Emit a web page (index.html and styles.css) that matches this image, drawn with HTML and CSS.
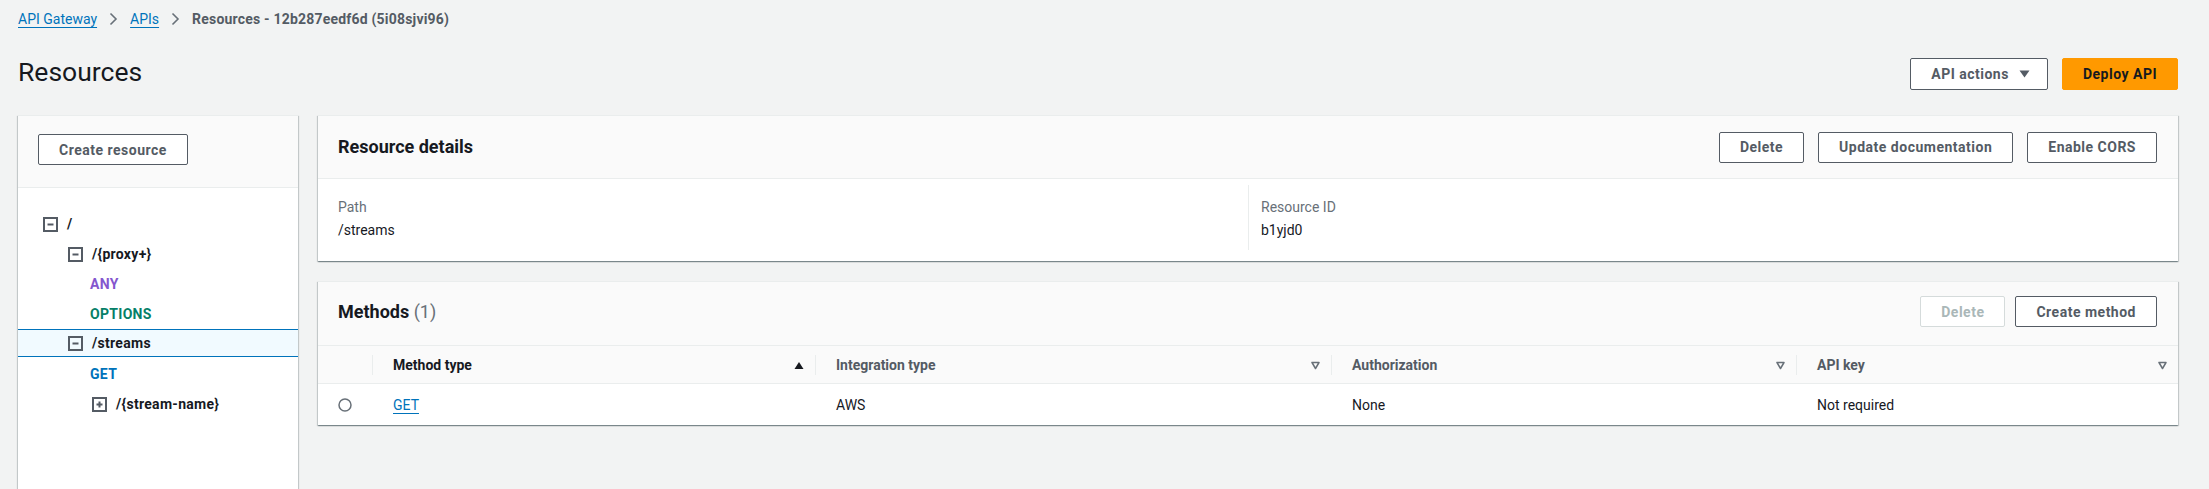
FILE: index.html
```html
<!DOCTYPE html>
<html lang="en">
<head>
<meta charset="utf-8">
<title>Resources - API Gateway</title>
<link rel="stylesheet" href="styles.css">
</head>
<body>
<div class="page">
  <nav class="crumbs">
    <a class="crumb-link" href="#">API Gateway</a>
    <svg class="chev" width="9" height="14" viewBox="0 0 9 14"><path d="M1.5 1.5 L7 7 L1.5 12.5" fill="none" stroke="#687078" stroke-width="1.6"/></svg>
    <a class="crumb-link" href="#">APIs</a>
    <svg class="chev" width="9" height="14" viewBox="0 0 9 14"><path d="M1.5 1.5 L7 7 L1.5 12.5" fill="none" stroke="#687078" stroke-width="1.6"/></svg>
    <span class="crumb-current">Resources - 12b287eedf6d (5i08sjvi96)</span>
  </nav>

  <header class="page-header">
    <h1>Resources</h1>
    <div class="header-actions">
      <button class="btn btn-tall btn-dropdown">API actions
        <svg width="11" height="8" viewBox="0 0 11 8"><path d="M0.5 0.5 H10.5 L5.5 7.5 Z" fill="#545b64"/></svg>
      </button>
      <button class="btn btn-tall btn-primary">Deploy API</button>
    </div>
  </header>

  <div class="layout">
    <aside class="panel tree-panel">
      <div class="tree-head">
        <button class="btn">Create resource</button>
      </div>
      <ul class="tree">
        <li class="row ind-0">
          <svg class="tog" width="15" height="15" viewBox="0 0 15 15"><rect x="1" y="1" width="13" height="13" fill="none" stroke="#545b64" stroke-width="2"/><path d="M4.5 7.5 H10.5" stroke="#545b64" stroke-width="2"/></svg>
          <span class="path">/</span>
        </li>
        <li class="row ind-1">
          <svg class="tog" width="15" height="15" viewBox="0 0 15 15"><rect x="1" y="1" width="13" height="13" fill="none" stroke="#545b64" stroke-width="2"/><path d="M4.5 7.5 H10.5" stroke="#545b64" stroke-width="2"/></svg>
          <span class="path">/{proxy+}</span>
        </li>
        <li class="row meth-1"><span class="m-any">ANY</span></li>
        <li class="row meth-1"><span class="m-options">OPTIONS</span></li>
        <li class="row ind-1 selected">
          <svg class="tog" width="15" height="15" viewBox="0 0 15 15"><rect x="1" y="1" width="13" height="13" fill="none" stroke="#545b64" stroke-width="2"/><path d="M4.5 7.5 H10.5" stroke="#545b64" stroke-width="2"/></svg>
          <span class="path">/streams</span>
        </li>
        <li class="row meth-1"><span class="m-get">GET</span></li>
        <li class="row ind-2">
          <svg class="tog" width="15" height="15" viewBox="0 0 15 15"><rect x="1" y="1" width="13" height="13" fill="none" stroke="#545b64" stroke-width="2"/><path d="M4.5 7.5 H10.5 M7.5 4.5 V10.5" stroke="#545b64" stroke-width="2"/></svg>
          <span class="path">/{stream-name}</span>
        </li>
      </ul>
    </aside>

    <main class="content">
      <section class="panel">
        <div class="panel-head">
          <h2>Resource details</h2>
          <div class="btn-group">
            <button class="btn">Delete</button>
            <button class="btn">Update documentation</button>
            <button class="btn">Enable CORS</button>
          </div>
        </div>
        <div class="details">
          <div class="detail-col">
            <div class="label">Path</div>
            <div class="value">/streams</div>
          </div>
          <div class="detail-col">
            <div class="label">Resource ID</div>
            <div class="value">b1yjd0</div>
          </div>
        </div>
      </section>

      <section class="panel">
        <div class="panel-head methods-head">
          <h2>Methods <span class="count">(1)</span></h2>
          <div class="btn-group tight">
            <button class="btn btn-disabled">Delete</button>
            <button class="btn">Create method</button>
          </div>
        </div>
        <div class="thead">
          <div class="th-blank"></div>
          <div class="th sorted"><span>Method type</span>
            <svg width="10" height="9" viewBox="0 0 10 9"><path d="M0.5 8 H9.5 L5 1 Z" fill="#16191f"/></svg>
          </div>
          <div class="th"><span>Integration type</span>
            <svg width="9" height="9" viewBox="0 0 9 9"><path d="M1 1.5 H8 L4.5 7.5 Z" fill="none" stroke="#687078" stroke-width="1.5" stroke-linejoin="round"/></svg>
          </div>
          <div class="th"><span>Authorization</span>
            <svg width="9" height="9" viewBox="0 0 9 9"><path d="M1 1.5 H8 L4.5 7.5 Z" fill="none" stroke="#687078" stroke-width="1.5" stroke-linejoin="round"/></svg>
          </div>
          <div class="th"><span>API key</span>
            <svg width="9" height="9" viewBox="0 0 9 9"><path d="M1 1.5 H8 L4.5 7.5 Z" fill="none" stroke="#687078" stroke-width="1.5" stroke-linejoin="round"/></svg>
          </div>
        </div>
        <div class="tr">
          <div class="td-radio">
            <svg width="14" height="14" viewBox="0 0 14 14"><circle cx="7" cy="7" r="6" fill="#fff" stroke="#687078" stroke-width="1.5"/></svg>
          </div>
          <div class="td"><a class="link" href="#">GET</a></div>
          <div class="td">AWS</div>
          <div class="td">None</div>
          <div class="td">Not required</div>
        </div>
      </section>
    </main>
  </div>
</div>
</body>
</html>
```

FILE: styles.css
```css
* { box-sizing: border-box; }

body {
  margin: 0;
  background: #f2f3f3;
  font-family: Roboto, "Noto Sans", Arial, sans-serif;
  font-size: 14px;
  line-height: 20px;
  color: #16191f;
}

.page {
  padding: 9px 31px 0 18px;
}

/* breadcrumbs */
.crumbs {
  display: flex;
  align-items: center;
  gap: 12px;
  height: 20px;
}
.crumb-link {
  color: #0073bb;
  text-decoration: underline;
  text-underline-offset: 3px;
}
.chev { display: block; }
.crumb-current {
  color: #545b64;
  font-weight: 700;
  letter-spacing: 0.2px;
}

/* header */
.page-header {
  display: flex;
  justify-content: space-between;
  margin-top: 25px;
}
.page-header h1 {
  margin: 0;
  font-size: 26.5px;
  line-height: 36px;
  font-weight: 400;
  color: #16191f;
}
.header-actions {
  align-self: flex-end;
  display: flex;
  gap: 14px;
}

/* buttons */
.btn {
  display: inline-flex;
  align-items: center;
  justify-content: center;
  gap: 12px;
  height: 31px;
  padding: 0 20px;
  background: #fff;
  border: 1px solid #545b64;
  border-radius: 2px;
  color: #545b64;
  font-family: inherit;
  font-size: 14px;
  font-weight: 700;
  line-height: 20px;
  letter-spacing: 0.5px;
  white-space: nowrap;
}
.btn-tall { height: 32px; }
.btn-dropdown {
  gap: 10px;
  padding: 0 17px 0 20px;
}
.btn-primary {
  background: #ff9900;
  border-color: #ff9900;
  color: #16191f;
}
.btn-disabled {
  border-color: #d5dbdb;
  color: #aab7b8;
}
.btn-group {
  display: flex;
  gap: 14px;
}
.btn-group.tight { gap: 10px; }

/* layout */
.layout {
  display: grid;
  grid-template-columns: 280px 1fr;
  gap: 20px;
  margin-top: 25px;
  align-items: start;
}
.content {
  display: flex;
  flex-direction: column;
  gap: 20px;
}

.panel {
  background: #fff;
  border-top: 1px solid #eaeded;
  box-shadow: 0 1px 1px 0 rgba(0, 28, 36, 0.3), 1px 1px 1px 0 rgba(0, 28, 36, 0.15), -1px 1px 1px 0 rgba(0, 28, 36, 0.15);
}

/* tree panel */
.tree-panel {
  height: 420px;
}
.tree-head {
  background: #fafafa;
  padding: 18px 20px 22px;
  border-bottom: 1px solid #eaeded;
}
.tree {
  list-style: none;
  margin: 0;
  padding: 21px 0 0;
}
.row {
  display: flex;
  align-items: center;
  gap: 9px;
  height: 30px;
  font-weight: 700;
  letter-spacing: 0.3px;
  color: #16191f;
}
.tog { display: block; flex: none; }
.ind-0 { padding-left: 25px; }
.ind-1 { padding-left: 50px; }
.ind-2 { padding-left: 74px; }
.meth-1 { padding-left: 72px; }
.row.selected {
  height: 28px;
  margin-bottom: 2px;
  background: #f1faff;
  border-top: 1px solid #0073bb;
  border-bottom: 1px solid #0073bb;
}
.m-any { color: #8456ce; }
.m-options { color: #067f68; }
.m-get { color: #0073bb; }

/* detail panels */
.panel-head {
  display: flex;
  align-items: center;
  justify-content: space-between;
  height: 63px;
  padding: 0 21px 0 20px;
  background: #fafafa;
  border-bottom: 1px solid #eaeded;
}
.panel-head h2 {
  margin: 0;
  font-size: 18px;
  line-height: 22px;
  font-weight: 700;
  color: #16191f;
}
.count {
  color: #687078;
  font-weight: 400;
}
.methods-head {
  height: auto;
  padding: 14px 21px 18px 20px;
}

.details {
  display: grid;
  grid-template-columns: 1fr 1fr;
  padding: 6px 20px 11px;
}
.detail-col {
  padding: 12px 0 10px;
}
.detail-col + .detail-col {
  border-left: 1px solid #eaeded;
  padding-left: 12px;
}
.label { color: #687078; }
.value { margin-top: 3px; color: #16191f; }

/* table */
.thead, .tr {
  display: grid;
  grid-template-columns: 54px 443px 516px 465px 1fr;
}
.thead {
  padding: 9px 0 8px;
  background: #fafafa;
  border-bottom: 1px solid #eaeded;
}
.th {
  display: flex;
  align-items: center;
  justify-content: space-between;
  height: 20px;
  padding: 0 11px 0 20px;
  border-left: 1px solid #eaeded;
  font-weight: 700;
  color: #545b64;
}
.th svg { display: block; }
.th.sorted { color: #16191f; }
.tr {
  height: 41px;
  align-items: center;
}
.td-radio {
  display: flex;
  justify-content: center;
}
.td-radio svg { display: block; }
.td {
  padding-left: 21px;
  color: #16191f;
}
.link {
  color: #0073bb;
  text-decoration: underline;
  text-underline-offset: 3px;
}
```
